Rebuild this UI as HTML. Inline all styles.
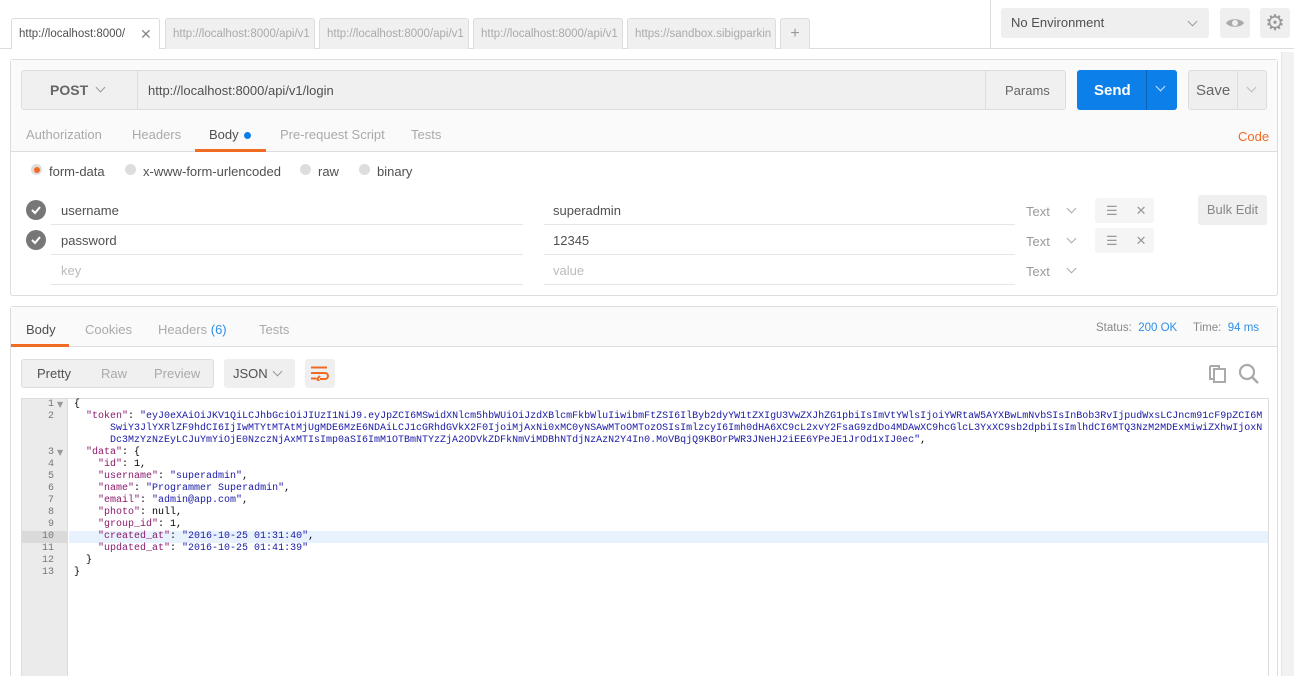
<!DOCTYPE html>
<html style="width:1294px;height:676px;overflow:hidden"><head><meta charset="utf-8"><style>
*{box-sizing:border-box;margin:0;padding:0}
body{width:1294px;height:676px;overflow:hidden;background:#fff;font-family:"Liberation Sans",sans-serif;font-size:13px;color:#505050;position:relative}
.a{position:absolute}
.tab{position:absolute;top:18px;height:31px;border:1px solid #ddd;border-bottom:none;background:#f0f0f0;color:#aaa;font-size:11.5px;line-height:30px;padding-left:7px;white-space:nowrap;overflow:hidden;border-radius:3px 3px 0 0}
.btn{position:absolute;background:#efefef;border-radius:3px}
.g{color:#9a9a9a}
.code{font-family:"Liberation Mono",monospace;font-size:10px;line-height:12px;white-space:pre}
.k{color:#8b1a6b}.s{color:#1a1aa6}
.chev{display:inline-block;width:7px;height:7px;border-right:1.5px solid #999;border-bottom:1.5px solid #999;transform:rotate(45deg)}
.ul{position:absolute;height:1px;background:#e6e6e6}
</style></head><body>
<div class="a" style="left:0;top:48px;width:1294px;height:1px;background:#ddd"></div>
<div class="a" style="left:990px;top:0;width:1px;height:48px;background:#ddd"></div>
<div class="tab" style="left:11px;width:149px;background:#fff;color:#505050;height:31px">http://localhost:8000/<span style="position:absolute;left:128px;color:#888;font-size:14px">✕</span></div>
<div class="tab" style="left:165px;width:150px">http://localhost:8000/api/v1</div>
<div class="tab" style="left:319px;width:150px">http://localhost:8000/api/v1</div>
<div class="tab" style="left:473px;width:150px">http://localhost:8000/api/v1</div>
<div class="tab" style="left:627px;width:149px">https://sandbox.sibigparkin</div>
<div class="tab" style="left:780px;width:30px;text-align:center;padding:0;font-size:16px;color:#999">+</div>
<div class="btn" style="left:1001px;top:8px;width:208px;height:30px;line-height:30px;padding-left:10px;color:#505050">No Environment<span class="chev a" style="left:188px;top:10px"></span></div>
<div class="btn" style="left:1220px;top:8px;width:30px;height:30px"><svg class="a" style="left:5px;top:9px" width="20" height="12" viewBox="0 0 20 12"><path d="M1 6C4 1 16 1 19 6C16 11 4 11 1 6Z" fill="#aaa"/><circle cx="10" cy="6" r="3" fill="#efefef"/></svg></div>
<div class="btn" style="left:1260px;top:8px;width:30px;height:30px;text-align:center;line-height:30px;color:#999;font-size:22px">⚙</div>
<div class="a" style="left:1281px;top:52px;width:13px;height:624px;background:#f2f2f2;border-left:1px solid #e4e4e4"></div>

<div class="a" style="left:10px;top:59px;width:1268px;height:237px;border:1px solid #ddd;border-radius:3px;background:#fff"></div>
<div class="a" style="left:11px;top:60px;width:1266px;height:92px;background:#fafafa;border-bottom:1px solid #ddd"></div>
<div class="btn" style="left:21px;top:70px;width:1045px;height:40px;border:1px solid #ddd;background:#f0f0f0"></div>
<div class="a" style="left:137px;top:71px;width:1px;height:38px;background:#ddd"></div>
<div class="a" style="left:985px;top:71px;width:1px;height:38px;background:#ddd"></div>
<div class="a" style="left:50px;top:82px;font-weight:bold;font-size:14px;color:#666">POST</div>
<span class="chev a" style="left:97px;top:84px"></span>
<div class="a" style="left:148px;top:83px;color:#505050">http://localhost:8000/api/v1/login</div>
<div class="a" style="left:1005px;top:83px;color:#666">Params</div>
<div class="a" style="left:1077px;top:70px;width:100px;height:40px;background:#0c7fe8;border-radius:3px"></div>
<div class="a" style="left:1146px;top:70px;width:1px;height:40px;background:#0a63b8"></div>
<div class="a" style="left:1094px;top:82px;color:#fff;font-size:15px;font-weight:bold">Send</div>
<span class="a" style="left:1157px;top:83px;width:7px;height:7px;border-right:1.5px solid #cfe3ff;border-bottom:1.5px solid #cfe3ff;transform:rotate(45deg)"></span>
<div class="btn" style="left:1188px;top:70px;width:79px;height:40px;border:1px solid #ddd"></div>
<div class="a" style="left:1237px;top:71px;width:1px;height:38px;background:#ddd"></div>
<div class="a" style="left:1196px;top:82px;color:#666;font-size:15px">Save</div>
<span class="chev a" style="left:1248px;top:84px;border-color:#bbb"></span>
<div class="a" style="left:26px;top:127px;color:#aaa">Authorization</div>
<div class="a" style="left:132px;top:127px;color:#aaa">Headers</div>
<div class="a" style="left:209px;top:127px;color:#505050">Body <span style="display:inline-block;width:7px;height:7px;border-radius:50%;background:#0c7fe8;margin-left:2px"></span></div>
<div class="a" style="left:195px;top:149px;width:71px;height:3px;background:#f26b23"></div>
<div class="a" style="left:280px;top:127px;color:#aaa">Pre-request Script</div>
<div class="a" style="left:411px;top:127px;color:#aaa">Tests</div>
<div class="a" style="left:1238px;top:129px;color:#f26b23">Code</div>
<div class="a" style="left:31px;top:164px;width:11px;height:11px;border-radius:50%;background:#ddd"><div class="a" style="left:2.5px;top:2.5px;width:6px;height:6px;border-radius:50%;background:#f26b23"></div></div>
<div class="a" style="left:49px;top:164px">form-data</div>
<div class="a" style="left:125px;top:164px;width:11px;height:11px;border-radius:50%;background:#ddd"></div>
<div class="a" style="left:143px;top:164px">x-www-form-urlencoded</div>
<div class="a" style="left:300px;top:164px;width:11px;height:11px;border-radius:50%;background:#ddd"></div>
<div class="a" style="left:318px;top:164px">raw</div>
<div class="a" style="left:359px;top:164px;width:11px;height:11px;border-radius:50%;background:#ddd"></div>
<div class="a" style="left:377px;top:164px">binary</div>
<svg class="a" style="left:26px;top:200px" width="20" height="50"><circle cx="10" cy="10" r="10" fill="#777"/><path d="M6 10l3 3 5-6" stroke="#fff" stroke-width="2" fill="none"/><circle cx="10" cy="40" r="10" fill="#777"/><path d="M6 40l3 3 5-6" stroke="#fff" stroke-width="2" fill="none"/></svg>
<div class="a" style="left:61px;top:203px">username</div>
<div class="a" style="left:553px;top:203px">superadmin</div>
<div class="a" style="left:61px;top:233px">password</div>
<div class="a" style="left:553px;top:233px">12345</div>
<div class="a" style="left:61px;top:263px;color:#bbb">key</div>
<div class="a" style="left:553px;top:263px;color:#bbb">value</div>
<div class="ul" style="left:51px;top:224px;width:472px"></div><div class="ul" style="left:544px;top:224px;width:471px"></div>
<div class="ul" style="left:51px;top:254px;width:472px"></div><div class="ul" style="left:544px;top:254px;width:471px"></div>
<div class="ul" style="left:51px;top:284px;width:472px"></div><div class="ul" style="left:544px;top:284px;width:471px"></div>
<div class="a g" style="left:1026px;top:204px">Text</div><span class="chev a" style="left:1068px;top:205px;border-color:#aaa"></span>
<div class="a g" style="left:1026px;top:234px">Text</div><span class="chev a" style="left:1068px;top:235px;border-color:#aaa"></span>
<div class="a g" style="left:1026px;top:264px">Text</div><span class="chev a" style="left:1068px;top:265px;border-color:#aaa"></span>
<div class="btn" style="left:1095px;top:198px;width:59px;height:25px;background:#f5f5f5;color:#999;line-height:25px"><span style="margin-left:11px">☰</span><span style="margin-left:18px">✕</span></div>
<div class="btn" style="left:1095px;top:228px;width:59px;height:25px;background:#f5f5f5;color:#999;line-height:25px"><span style="margin-left:11px">☰</span><span style="margin-left:18px">✕</span></div>
<div class="btn" style="left:1198px;top:195px;width:69px;height:30px;line-height:30px;text-align:center;color:#888">Bulk Edit</div>

<div class="a" style="left:10px;top:306px;width:1268px;height:380px;border:1px solid #ddd;border-radius:3px;background:#fff"></div>
<div class="a" style="left:11px;top:307px;width:1266px;height:40px;background:#fafafa;border-bottom:1px solid #ddd"></div>
<div class="a" style="left:26px;top:322px">Body</div>
<div class="a" style="left:11px;top:344px;width:58px;height:3px;background:#f26b23"></div>
<div class="a" style="left:85px;top:322px;color:#aaa">Cookies</div>
<div class="a" style="left:158px;top:322px;color:#aaa">Headers <span style="color:#2f8fe6">(6)</span></div>
<div class="a" style="left:259px;top:322px;color:#aaa">Tests</div>
<div class="a" style="left:1096px;top:322px;font-size:11.5px;color:#888">Status: <span style="color:#2f8fe6">&nbsp;200 OK</span></div>
<div class="a" style="left:1193px;top:322px;font-size:11.5px;color:#888">Time: <span style="color:#2f8fe6">&nbsp;94 ms</span></div>
<div class="btn" style="left:21px;top:359px;width:193px;height:29px;border:1px solid #ddd;background:#f0f0f0;line-height:27px"><span class="a" style="left:15px;color:#505050">Pretty</span><span class="a" style="left:79px;color:#aaa">Raw</span><span class="a" style="left:132px;color:#aaa">Preview</span></div>
<div class="btn" style="left:224px;top:359px;width:71px;height:29px;line-height:29px;padding-left:9px">JSON<span class="chev a" style="left:50px;top:9px"></span></div>
<div class="btn" style="left:305px;top:359px;width:30px;height:29px"><svg class="a" style="left:6px;top:7px" width="18" height="15"><path d="M0 1.5h16M0 7h14a3 3 0 0 1 0 6h-5M0 12.5h5" stroke="#f26b23" stroke-width="2" fill="none"/><path d="M9 10l-3 3 3 3" stroke="#f26b23" stroke-width="2" fill="none"/></svg></div>
<svg class="a" style="left:1209px;top:364px" width="18" height="20"><path d="M1 2h9v2M1 2v13h3" stroke="#aaa" stroke-width="2" fill="none"/><rect x="5" y="5" width="11" height="13" stroke="#aaa" stroke-width="2" fill="none"/></svg>
<svg class="a" style="left:1238px;top:363px" width="22" height="22"><circle cx="9" cy="9" r="7" stroke="#aaa" stroke-width="2.2" fill="none"/><path d="M14 14l6 6" stroke="#aaa" stroke-width="2.5"/></svg>

<div class="a" style="left:21px;top:398px;width:1248px;height:290px;border:1px solid #ddd;background:#fff"></div>
<div class="a" style="left:22px;top:399px;width:46px;height:280px;background:#ebebeb;border-right:1px solid #ddd"></div>
<div class="a" style="left:22px;top:531px;width:46px;height:12px;background:#dadada"></div>
<div class="a" style="left:69px;top:531px;width:1199px;height:12px;background:#e8f2fe"></div>
<div class="a code" style="left:22px;top:399px;width:46px;color:#777;text-align:right;padding-right:14px">1
2


3
4
5
6
7
8
9
10
11
12
13</div>
<div class="a" style="left:57px;top:399px;color:#999;font-size:8px;line-height:12px;font-family:'DejaVu Sans',sans-serif">▼</div>
<div class="a" style="left:57px;top:447px;color:#999;font-size:8px;line-height:12px;font-family:'DejaVu Sans',sans-serif">▼</div>
<div class="a code" style="left:74px;top:399px;color:#000">{
  <span class="k">"token"</span>: <span class="s">"eyJ0eXAiOiJKV1QiLCJhbGciOiJIUzI1NiJ9.eyJpZCI6MSwidXNlcm5hbWUiOiJzdXBlcmFkbWluIiwibmFtZSI6IlByb2dyYW1tZXIgU3VwZXJhZG1pbiIsImVtYWlsIjoiYWRtaW5AYXBwLmNvbSIsInBob3RvIjpudWxsLCJncm91cF9pZCI6M</span>
<span class="s">      SwiY3JlYXRlZF9hdCI6IjIwMTYtMTAtMjUgMDE6MzE6NDAiLCJ1cGRhdGVkX2F0IjoiMjAxNi0xMC0yNSAwMToOMTozOSIsImlzcyI6Imh0dHA6XC9cL2xvY2FsaG9zdDo4MDAwXC9hcGlcL3YxXC9sb2dpbiIsImlhdCI6MTQ3NzM2MDExMiwiZXhwIjoxN</span>
<span class="s">      Dc3MzYzNzEyLCJuYmYiOjE0NzczNjAxMTIsImp0aSI6ImM1OTBmNTYzZjA2ODVkZDFkNmViMDBhNTdjNzAzN2Y4In0.MoVBqjQ9KBOrPWR3JNeHJ2iEE6YPeJE1JrOd1xIJ0ec"</span>,
  <span class="k">"data"</span>: {
    <span class="k">"id"</span>: 1,
    <span class="k">"username"</span>: <span class="s">"superadmin"</span>,
    <span class="k">"name"</span>: <span class="s">"Programmer Superadmin"</span>,
    <span class="k">"email"</span>: <span class="s">"admin@app.com"</span>,
    <span class="k">"photo"</span>: null,
    <span class="k">"group_id"</span>: 1,
    <span class="k">"created_at"</span>: <span class="s">"2016-10-25 01:31:40"</span>,
    <span class="k">"updated_at"</span>: <span class="s">"2016-10-25 01:41:39"</span>
  }
}</div>
</body></html>
